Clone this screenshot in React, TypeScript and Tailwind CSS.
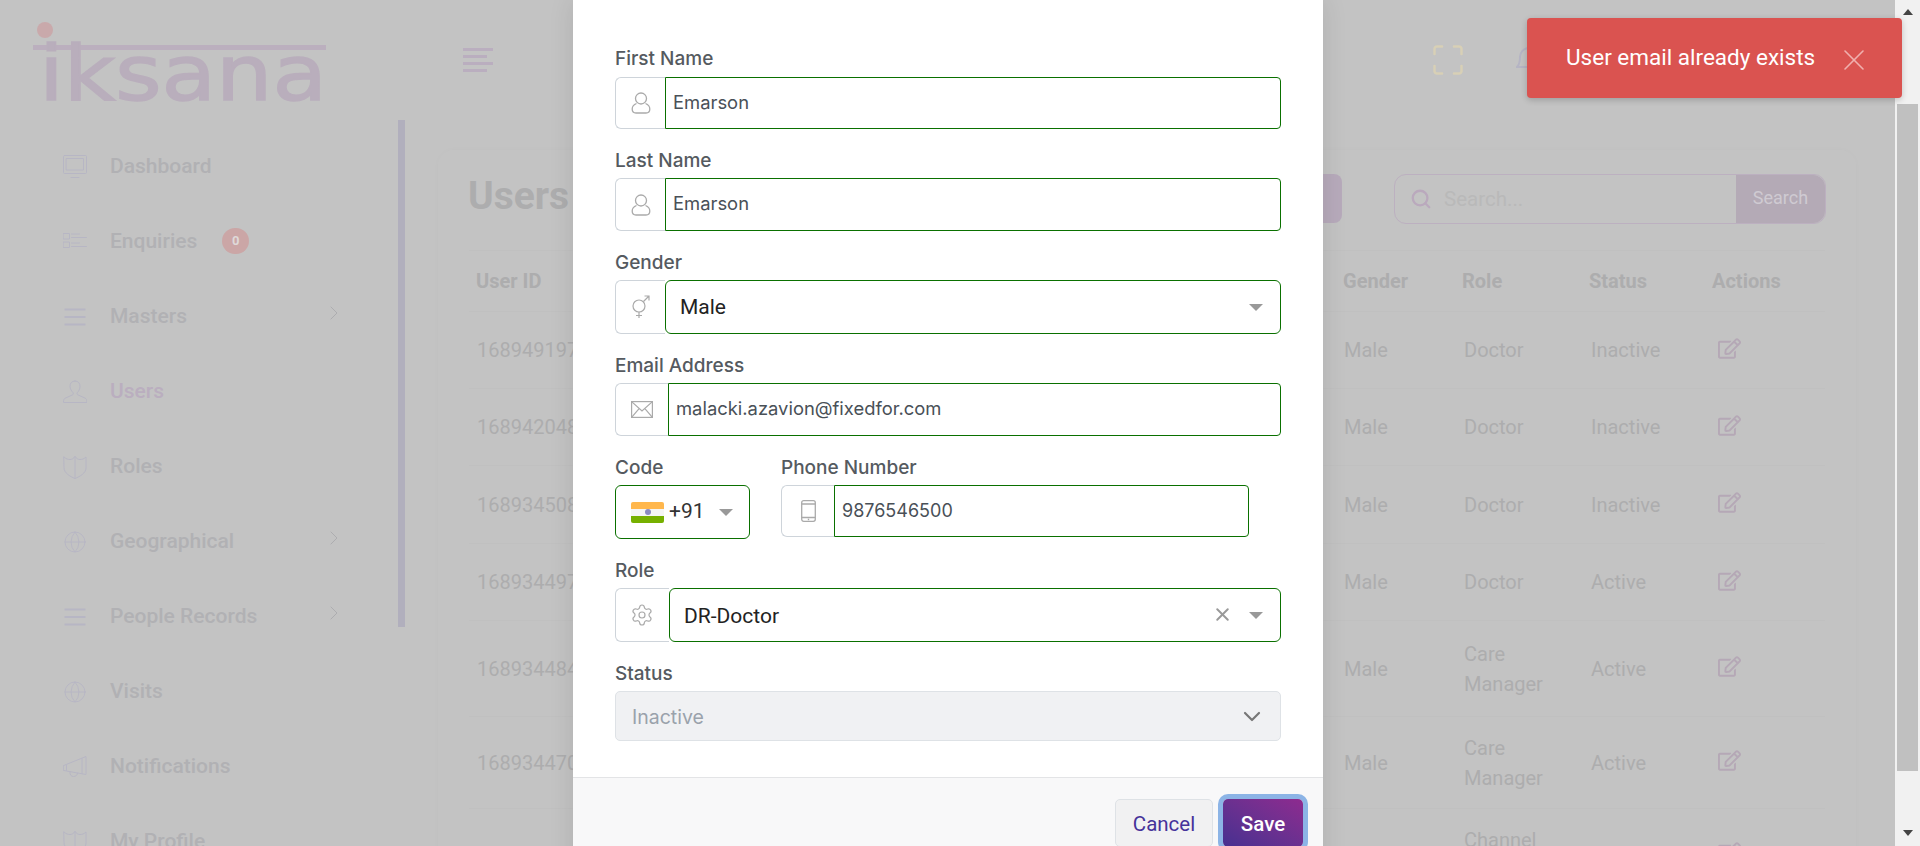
import React from "react";
import { FaRegEdit } from "react-icons/fa";
import { Settings, ChevronRight, X, Search, Globe } from "lucide-react";

const navStroke = "#b7b6c4";

function Ic({ children, w = 24, h = 24, vb = "0 0 24 24", stroke = navStroke, sw = 1 }: { children: React.ReactNode; w?: number; h?: number; vb?: string; stroke?: string; sw?: number }) {
  return (
    <svg width={w} height={h} viewBox={vb} fill="none" stroke={stroke} strokeWidth={sw} strokeLinecap="round" strokeLinejoin="round">
      {children}
    </svg>
  );
}

const MonitorIc = () => (
  <Ic>
    <rect x="0.5" y="0.5" width="23" height="18" rx="1" />
    <rect x="3.5" y="3.5" width="17" height="11.5" />
    <path d="M8 22.5h8" />
  </Ic>
);
const ListIc = () => (
  <Ic>
    <rect x="0.5" y="3.5" width="6" height="5.5" />
    <rect x="0.5" y="12" width="6" height="5.5" />
    <path d="M8.5 4h8M8.5 7.5h15M8.5 13h8M8.5 16.5h15" />
  </Ic>
);
const MenuIc = () => (
  <Ic sw={2}>
    <path d="M1.500 4.500h21M1.500 12h21M1.500 19.500h21" strokeLinecap="butt" />
  </Ic>
);
const PersonIc = ({ stroke = navStroke }: { stroke?: string }) => (
  <Ic stroke={stroke}>
    <path d="M12 1c3.400 0 5 2.400 5 5.300 0 2.600-1.200 4.800-2.600 6.300-.6.7-.4 1.800.4 2.200l7.400 3.400c1.200.6 1.700 1.600 1.700 4.300H.5c0-2.700.5-3.700 1.700-4.300l7.400-3.400c.8-.4 1-1.500.4-2.200C8.600 11.100 7 8.900 7 6.300 7 3.400 8.600 1 12 1z" />
  </Ic>
);
const ShieldIc = () => (
  <Ic>
    <path d="M1 2c2 2 4 2.500 6 2.500S10.500 3.500 12 1.500c1.500 2 3 3 5 3s4-.5 6-2.500v11c0 5-6 8.500-11 10.500C7 21.500 1 18 1 13z" />
    <path d="M12 1.500v21.500" />
  </Ic>
);
const GlobeIc = () => <Globe size={28} strokeWidth={0.900} color={navStroke} />;
const MegaIc = () => (
  <Ic>
    <path d="M.7 10.500 23 1.500v18L.7 15.500zM19 3.200v15.500M7 16.500c-.5 3 1 5 3.500 5s4-1.500 4-3.300" />
    <path d="M3.500 10.500v5" />
  </Ic>
);

const navItems: { label: string; icon: React.ReactNode; badge?: boolean; chev?: boolean; active?: boolean }[] = [
  { label: "Dashboard", icon: <MonitorIc /> },
  { label: "Enquiries", icon: <ListIc />, badge: true },
  { label: "Masters", icon: <MenuIc />, chev: true },
  { label: "Users", icon: <PersonIc />, active: true },
  { label: "Roles", icon: <ShieldIc /> },
  { label: "Geographical", icon: <GlobeIc />, chev: true },
  { label: "People Records", icon: <MenuIc />, chev: true },
  { label: "Visits", icon: <GlobeIc /> },
  { label: "Notifications", icon: <MegaIc /> },
  { label: "My Profile", icon: <ShieldIc /> },
];

const rows = [
  { id: "1689491977", g: "Male", r: ["Doctor"], s: "Inactive", h: "h-[77px]" },
  { id: "1689420488", g: "Male", r: ["Doctor"], s: "Inactive", h: "h-[77px]" },
  { id: "1689345088", g: "Male", r: ["Doctor"], s: "Inactive", h: "h-[78px]" },
  { id: "1689344977", g: "Male", r: ["Doctor"], s: "Active", h: "h-[77px]" },
  { id: "1689344844", g: "Male", r: ["Care", "Manager"], s: "Active", h: "h-[96px]" },
  { id: "1689344700", g: "Male", r: ["Care", "Manager"], s: "Active", h: "h-[92px]" },
  { id: "1689344611", g: "Male", r: ["Channel", "Partner"], s: "Active", h: "h-[92px]" },
];

function Label({ children, first }: { children: React.ReactNode; first?: boolean }) {
  return <div className={`mb-[6.4px] h-[24px] font-['Inter',sans-serif] text-[19px] font-medium leading-[24px] text-[#555a60] ${first ? "" : "translate-y-[1px]"}`}>{children}</div>;
}

function Group({ icon, iconW, h, children, rounded }: { icon: React.ReactNode; iconW: number; h: string; children: React.ReactNode; rounded?: boolean }) {
  return (
    <div className={`flex ${h}`}>
      <div style={{ width: iconW }} className="flex shrink-0 items-center justify-center rounded-l-[6px] border border-r-0 border-[#ced4da] bg-white">
        {icon}
      </div>
      <div className={`flex min-w-0 flex-1 items-center border border-[#0a7000] bg-white ${rounded ? "rounded-[6px]" : "rounded-r-[4px]"}`}>{children}</div>
    </div>
  );
}

const Caret = () => <span className="block h-0 w-0 border-x-[7px] border-t-[7px] border-x-transparent border-t-[#999999]" />;

const UserOutline = () => (
  <svg width="20" height="22" viewBox="0 0 20 22" fill="none" stroke="#aaaaaa" strokeWidth="1.300">
    <ellipse cx="10" cy="6.500" rx="5.500" ry="5.500" />
    <path d="M5.500 11.500C3 12.500 1.200 14 1.200 17c0 2.500 1.300 4 3.800 4h10c2.500 0 3.800-1.500 3.800-4 0-3-1.800-4.500-4.300-5.500" />
  </svg>
);

function Input({ value, size = "text-[18.4px]" }: { value: string; size?: string }) {
  return <div className={`-mt-[2px] pl-[7px] font-['Inter',sans-serif] text-[#495057] ${size}`}>{value}</div>;
}

export default function App() {
  return (
    <div className="flex h-[846px] w-[1920px] overflow-hidden bg-[#f1f1f1] font-['Roboto',sans-serif]">
      <div className="relative h-full w-[1895px] shrink-0 overflow-hidden bg-[#c3c3c3]">
        {/* top bar */}
        <header className="flex h-[120px] items-start">
          <div className="w-[463px] shrink-0 pl-[33px] pt-[20px]">
            <svg width="296" height="92" viewBox="0 0 296 92">
              <circle cx="12" cy="10" r="8" fill="#c9a9ab" />
              <rect x="0" y="25" width="293" height="5" fill="#bbafbe" />
              <text x="6" y="80" textLength="288" lengthAdjust="spacingAndGlyphs" fontFamily="'DejaVu Sans', sans-serif" fontSize="76" fill="#b9aebc" stroke="#b9aebc" strokeWidth="1.500">iksana</text>
            </svg>
          </div>
          <div className="mt-[48px] flex w-[30px] flex-col gap-[4px]">
            <span className="h-[3px] w-[30px] bg-[#baaebf]" />
            <span className="h-[3px] w-[24px] bg-[#baaebf]" />
            <span className="h-[3px] w-[30px] bg-[#baaebf]" />
            <span className="h-[3px] w-[24px] bg-[#baaebf]" />
          </div>
          <div className="ml-[940px] mt-[45px]">
            <svg width="30" height="30" viewBox="0 0 30 30" fill="none" stroke="#d8d0b6" strokeWidth="2.500" strokeLinecap="round">
              <path d="M1.500 9V4a2.500 2.500 0 0 1 2.500-2.500h5M21 1.500h5A2.500 2.500 0 0 1 28.500 4v5M28.500 21v5a2.500 2.500 0 0 1-2.500 2.500h-5M9 28.500H4A2.500 2.500 0 0 1 1.500 26v-5" />
            </svg>
          </div>
          <div className="ml-[53px] mt-[45px]">
            <svg width="26" height="28" viewBox="0 0 26 28" fill="none" stroke="#b5b4c4" strokeWidth="2">
              <path d="M1 22c2-2 3-4 3-10a9 9 0 0 1 18 0c0 6 1 8 3 10z" />
            </svg>
          </div>
        </header>

        <div className="flex h-[726px]">
          {/* sidebar */}
          <aside className="flex w-[405px] shrink-0">
            <nav className="w-[398px] pl-[63px] pt-[9px]">
              {navItems.map((n) => (
                <div key={n.label} className="flex h-[75px] items-center">
                  <span className="flex w-[24px] shrink-0 justify-center">{n.icon}</span>
                  <span className={`ml-[23px] text-[21px] font-medium ${n.active ? "text-[#baaebf]" : "text-[#b1b1b4]"}`}>{n.label}</span>
                  {n.badge && <span className="ml-[25px] flex h-[26px] w-[27px] -translate-y-[1px] items-center justify-center rounded-full bg-[#cba6a6] text-[13px] font-bold text-[#dfd9d9]">0</span>}
                  {n.chev && <ChevronRight size={24} strokeWidth={1} color="#adadb0" className="ml-auto mr-[52px] -translate-y-[4px]" />}
                </div>
              ))}
            </nav>
            <div className="h-[507px] w-[7px] bg-[#b1afbd]" />
          </aside>

          {/* content */}
          <main className="ml-[33px] mt-[30px] h-[800px] w-[1418px] shrink-0 rounded-[16px] pl-[31px] pr-[30px] shadow-[0_0_6px_rgba(0,0,0,0.02)]">
            <div className="flex h-[100px] items-start">
              <h1 className="-ml-[1px] mt-[21px] text-[39px] font-bold leading-[50px] text-[#adadae]">Users</h1>
              <button className="ml-auto mt-[24px] h-[49px] w-[140px] rounded-[8px] bg-[#b7aabb] pl-[30px] text-left text-[18px] text-[#cfc9d2]">Add User</button>
              <div className="ml-[52px] mt-[24px] flex h-[50px] w-[432px] rounded-[12px] border border-[#bcb0c0]">
                <div className="flex flex-1 items-center pl-[15px]">
                  <Search size={22} strokeWidth={2.500} color="#baa9bd" />
                  <span className="ml-[12px] text-[20.5px] text-[#b9b9b9]">Search...</span>
                </div>
                <div className="flex w-[89px] items-center justify-center rounded-r-[12px] bg-[#b4aab6] pb-[3px] text-[18px] text-[#cfcad2]">Search</div>
              </div>
            </div>
            <table className="w-[1356px] table-fixed border-collapse text-[20px] text-[#adadae]">
              <colgroup>
                <col className="w-[134px]" />
                <col className="w-[733px]" />
                <col className="w-[119px]" />
                <col className="w-[127px]" />
                <col className="w-[123px]" />
                <col className="w-[120px]" />
              </colgroup>
              <thead>
                <tr className="h-[61px] border-y border-[#c0c0c0] text-left">
                  <th className="pl-[7px] font-bold">User ID</th>
                  <th />
                  <th className="pl-[7px] font-bold">Gender</th>
                  <th className="pl-[7px] font-bold">Role</th>
                  <th className="pl-[7px] font-bold">Status</th>
                  <th className="pl-[7px] font-bold">Actions</th>
                </tr>
              </thead>
              <tbody>
                {rows.map((r) => (
                  <tr key={r.id} className={`${r.h} border-b border-[#c0c0c0]`}>
                    <td className="pl-[8px]">{r.id}</td>
                    <td />
                    <td className="pl-[8px]">{r.g}</td>
                    <td className="pl-[9px] leading-[30px]">
                      {r.r.map((t) => (
                        <div key={t}>{t}</div>
                      ))}
                    </td>
                    <td className="pl-[9px]">{r.s}</td>
                    <td className="pl-[13px]">
                      <FaRegEdit size={23} color="#b5a8b6" className="-mt-[4px]" />
                    </td>
                  </tr>
                ))}
              </tbody>
            </table>
          </main>
        </div>

        {/* modal */}
        <div className="absolute left-[573px] top-0 flex h-[900px] w-[750px] flex-col bg-white shadow-[0_0_24px_rgba(0,0,0,0.1)]">
          <div className="h-[777px] px-[42px] pt-[47px]">
            <div className="mb-[18.6px]">
              <Label first>First Name</Label>
              <Group icon={<UserOutline />} iconW={50} h="h-[52px]"><Input value="Emarson" /></Group>
            </div>
            <div className="mb-[18.6px]">
              <Label>Last Name</Label>
              <Group icon={<UserOutline />} iconW={50} h="h-[53px]"><Input value="Emarson" /></Group>
            </div>
            <div className="mb-[18.6px]">
              <Label>Gender</Label>
              <Group
                rounded
                iconW={50}
                h="h-[54px]"
                icon={
                  <svg width="20" height="24" viewBox="0 0 20 24" fill="none" stroke="#aaaaaa" strokeWidth="1.200">
                    <circle cx="8" cy="11" r="6" />
                    <path d="M12.500 6.500 18 1M13.500 1H18v4.500M8 17v6M5 20.500h6" />
                  </svg>
                }
              >
                <span className="flex-1 pl-[14px] text-[21px] text-[#222222]">Male</span>
                <span className="pr-[17px]"><Caret /></span>
              </Group>
            </div>
            <div className="mb-[18.6px]">
              <Label>Email Address</Label>
              <Group
                iconW={53}
                h="h-[53px]"
                icon={
                  <svg width="22" height="17" viewBox="0 0 22 17" fill="none" stroke="#aaaaaa" strokeWidth="1.200">
                    <rect x="0.600" y="0.600" width="20.800" height="15.800" />
                    <path d="M.6.600 11 10 21.400.600M.6 16.400l7.500-8.800M21.400 16.400l-7.500-8.800" />
                  </svg>
                }
              >
                <Input value="malacki.azavion@fixedfor.com" />
              </Group>
            </div>
            <div className="mb-[18.6px] flex gap-[31px]">
              <div className="w-[135px]">
                <Label>Code</Label>
                <div className="flex h-[54px] items-center rounded-[6px] border border-[#0a7000] pl-[15px]">
                  <span className="flex h-[21px] w-[33px] flex-col overflow-hidden rounded-[2px]">
                    <span className="h-[7px] bg-[#ffb74d]" />
                    <span className="flex h-[7px] items-center justify-center bg-[#f5f5f5]">
                      <span className="h-[6px] w-[6px] rounded-full bg-[#8a8ac0]" />
                    </span>
                    <span className="h-[7px] bg-[#76b000]" />
                  </span>
                  <span className="ml-[5px] -mt-[2px] text-[21px] text-[#333333]">+91</span>
                  <span className="ml-[14px]"><Caret /></span>
                </div>
              </div>
              <div className="w-[468px]">
                <Label>Phone Number</Label>
                <Group
                  iconW={53}
                  h="h-[52px]"
                  icon={
                    <svg width="15" height="22" viewBox="0 0 15 22" fill="none" stroke="#aaaaaa" strokeWidth="1.300">
                      <rect x="0.700" y="0.700" width="13.600" height="20.600" rx="2" />
                      <path d="M.7 4h13.600M.7 17.500h13.600M6.800 19.500h1.400" />
                    </svg>
                  }
                >
                  <Input value="9876546500" size="text-[18px]" />
                </Group>
              </div>
            </div>
            <div className="mb-[18.6px]">
              <Label>Role</Label>
              <Group rounded iconW={54} h="h-[54px]" icon={<Settings size={24} strokeWidth={1.200} color="#aaaaaa" className="-ml-[2px]" />}>
                <span className="flex-1 translate-y-[1px] pl-[14px] text-[21px] text-[#222222]">DR-Doctor</span>
                <X size={21} strokeWidth={2.300} color="#999999" className="mr-[16px] -translate-y-[1px]" />
                <span className="pr-[17px]"><Caret /></span>
              </Group>
            </div>
            <div>
              <Label>Status</Label>
              <div className="flex h-[50px] items-center justify-between rounded-[5px] border border-[#dee2e6] bg-[#f0f1f3] pl-[16px] pr-[19px]">
                <span className="translate-y-[1px] font-['Inter',sans-serif] text-[19.5px] text-[#9aa2ab]">Inactive</span>
                <svg width="18" height="11" viewBox="0 0 18 11" fill="none" stroke="#777777" strokeWidth="2.200" strokeLinecap="round" strokeLinejoin="round">
                  <path d="M2 2l7 7 7-7" />
                </svg>
              </div>
            </div>
          </div>
          <footer className="flex flex-1 items-start justify-end gap-[10px] border-t border-[#e3e4e6] bg-[#f8f8f9] pr-[20px] pt-[21px]">
            <button className="h-[48px] w-[98px] rounded-[5px] border border-[#dee2e6] bg-[#f1f1f2] pt-[2px] text-[20.5px] text-[#46339a]">Cancel</button>
            <button className="h-[48px] w-[80px] rounded-[5px] bg-linear-to-tr from-[#462f90] to-[#8e2a8f] pt-[2px] text-[20.5px] font-medium text-white ring-[5px] ring-[#8cb4e6]">Save</button>
          </footer>
        </div>
      </div>

      {/* page scrollbar */}
      <div className="flex w-[25px] shrink-0 flex-col items-center">
        <span className="mt-[9px] block h-0 w-0 border-x-[5px] border-b-[6px] border-x-transparent border-b-[#444444]" />
        <div className="mt-[89px] h-[667px] w-[21px] bg-[#c0c0c0]" />
        <span className="mt-[59px] block h-0 w-0 border-x-[5px] border-t-[6px] border-x-transparent border-t-[#444444]" />
      </div>

      {/* toast */}
      <div className="absolute left-[1527px] top-[18px] z-10 flex h-[80px] w-[375px] items-center rounded-[4px] bg-[#da5350] pl-[39px] pr-[30px] shadow-[0_2px_6px_rgba(0,0,0,0.2)]">
        <span className="flex-1 text-[22.5px] text-white">User email already exists</span>
        <X size={36} strokeWidth={1.070} color="#f0b0ae" className="mt-[4px]" />
      </div>
    </div>
  );
}
